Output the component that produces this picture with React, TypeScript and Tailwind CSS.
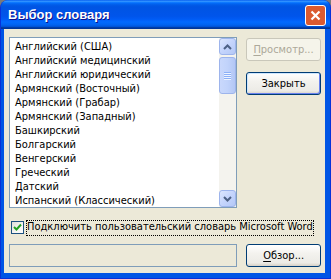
import clsx from "clsx";

const items = [
  "Английский (США)",
  "Английский медицинский",
  "Английский юридический",
  "Армянский (Восточный)",
  "Армянский (Грабар)",
  "Армянский (Западный)",
  "Башкирский",
  "Болгарский",
  "Венгерский",
  "Греческий",
  "Датский",
  "Испанский (Классический)",
];

const uiFont = "font-['DejaVu_Sans_Condensed','DejaVu_Sans',sans-serif] text-[11px]";

function XpButton({
  label,
  accessIdx,
  disabled,
  isDefault,
}: {
  label: string;
  accessIdx?: number;
  disabled?: boolean;
  isDefault?: boolean;
}) {
  return (
    <button
      className={clsx(
        "w-[75px] h-[23px] rounded-[3px] border leading-none flex items-center justify-center",
        uiFont,
        disabled
          ? "border-[#C9C7BA] text-[#ACA899] bg-[#F5F4EA]"
          : "border-[#003C74] text-black bg-[linear-gradient(180deg,#FFFFFF_0%,#F3F2EE_40%,#ECEBE6_85%,#D6D0C5_100%)]",
        isDefault && "shadow-[inset_-1px_-1px_0_#6982EE,inset_1px_1px_0_#CEE7FF]"
      )}
    >
      {accessIdx === undefined ? (
        <span>{label}</span>
      ) : (
        <span>
          {label.slice(0, accessIdx)}
          <span className="underline underline-offset-2">{label[accessIdx]}</span>
          {label.slice(accessIdx + 1)}
        </span>
      )}
    </button>
  );
}

function ScrollArrow({ up }: { up?: boolean }) {
  return (
    <div className="w-[17px] h-[17px] rounded-[3px] border border-[#9DB4EC] bg-[linear-gradient(135deg,#DCE6FD_0%,#C4D4FC_50%,#B4C8F6_100%)] flex items-center justify-center">
      <svg width="9" height="6" viewBox="0 0 9 6">
        <path
          d={up ? "M1 5 L4.5 1.5 L8 5" : "M1 1 L4.5 4.5 L8 1"}
          fill="none"
          stroke="#4D6185"
          strokeWidth="2"
        />
      </svg>
    </div>
  );
}

export default function App() {
  return (
    <div className="w-[331px] h-[279px] bg-[#7A7A7A]">
      <div className="w-full h-full flex flex-col rounded-t-[8px] overflow-hidden bg-[#0055E5] border border-[#0831D9] border-t-0">
        {/* Title bar */}
        <div className="h-[29px] shrink-0 flex items-center justify-between pl-[7px] pr-[4px] bg-[linear-gradient(180deg,#0058EE_0%,#3593FF_4%,#288EFF_6%,#127DFF_8%,#036FFC_10%,#0262EE_14%,#0057E5_20%,#0054E3_24%,#0055EB_56%,#005BF5_66%,#026AFE_76%,#0062EF_86%,#0052D6_92%,#0040AB_94%,#003092_100%)]">
          <span className="text-white font-bold text-[13px] font-['Liberation_Sans',sans-serif] [text-shadow:1px_1px_#0F1089] pt-[1px]">
            Выбор словаря
          </span>
          <div className="w-[21px] h-[21px] mt-[1px] rounded-[3px] border border-[#FFFFFF] bg-[#DB5A30] flex items-center justify-center">
            <svg width="11" height="11" viewBox="0 0 11 11">
              <path d="M1.5 1.5 L9.5 9.5 M9.5 1.5 L1.5 9.5" stroke="#FFFFFF" strokeWidth="2.2" />
            </svg>
          </div>
        </div>

        {/* Client area */}
        <div className="flex-1 ml-[3px] mr-[5px] mb-[5px] bg-[#ECE9D8] pt-[8px] pl-[5px] pr-[4px] flex flex-col">
          <div className="flex gap-[9px]">
            {/* List */}
            <div className="w-[229px] h-[171px] border border-[#7F9DB9] bg-white flex">
              <div className={clsx("flex-1 pt-[2px] pl-[5px] text-black", uiFont)}>
                {items.map((it) => (
                  <div key={it} className="h-[14px] leading-[14px] whitespace-nowrap">
                    {it}
                  </div>
                ))}
              </div>
              <div className="w-[17px] flex flex-col bg-[#F4F3EE]">
                <ScrollArrow up />
                <div className="mt-[2px] h-[37px] rounded-[3px] border border-[#9DB4EC] bg-[linear-gradient(90deg,#C9D8FC_0%,#C1D3FB_50%,#B3C7F5_100%)] flex flex-col items-center justify-center gap-[1px]">
                  {[0, 1, 2, 3].map((i) => (
                    <div key={i} className="w-[7px] h-[1px] bg-[#8CB0F8] shadow-[0_1px_0_#EEF4FE]" />
                  ))}
                </div>
                <div className="flex-1" />
                <ScrollArrow />
              </div>
            </div>
            {/* Right buttons */}
            <div className="flex flex-col gap-[11px] pt-[1px]">
              <XpButton label="Просмотр..." accessIdx={0} disabled />
              <XpButton label="Закрыть" isDefault />
            </div>
          </div>

          {/* Checkbox */}
          <div className="mt-[11px] h-[17px] flex items-center pl-[2px]">
            <div className="w-[13px] h-[13px] border border-[#1C5180] bg-[linear-gradient(135deg,#DCDCD7_0%,#F6F6F3_60%,#FFFFFF_100%)] flex items-center justify-center">
              <svg width="9" height="9" viewBox="0 0 9 9">
                <path d="M1 4 L3.5 6.5 L8 1.5" fill="none" stroke="#21A121" strokeWidth="2" />
              </svg>
            </div>
            <span className={clsx("ml-[2px] px-[1px] h-[16px] leading-[14px] outline outline-1 outline-dotted outline-black -outline-offset-1 text-black", uiFont)}>
              Подключить пользовательский словарь Microsoft Word
            </span>
          </div>

          {/* Path field + browse */}
          <div className="mt-[8px] flex gap-[9px]">
            <div className="w-[229px] h-[23px] border border-[#7F9DB9] bg-[#ECE9D8]" />
            <XpButton label="Обзор..." accessIdx={0} />
          </div>
        </div>
      </div>
    </div>
  );
}
